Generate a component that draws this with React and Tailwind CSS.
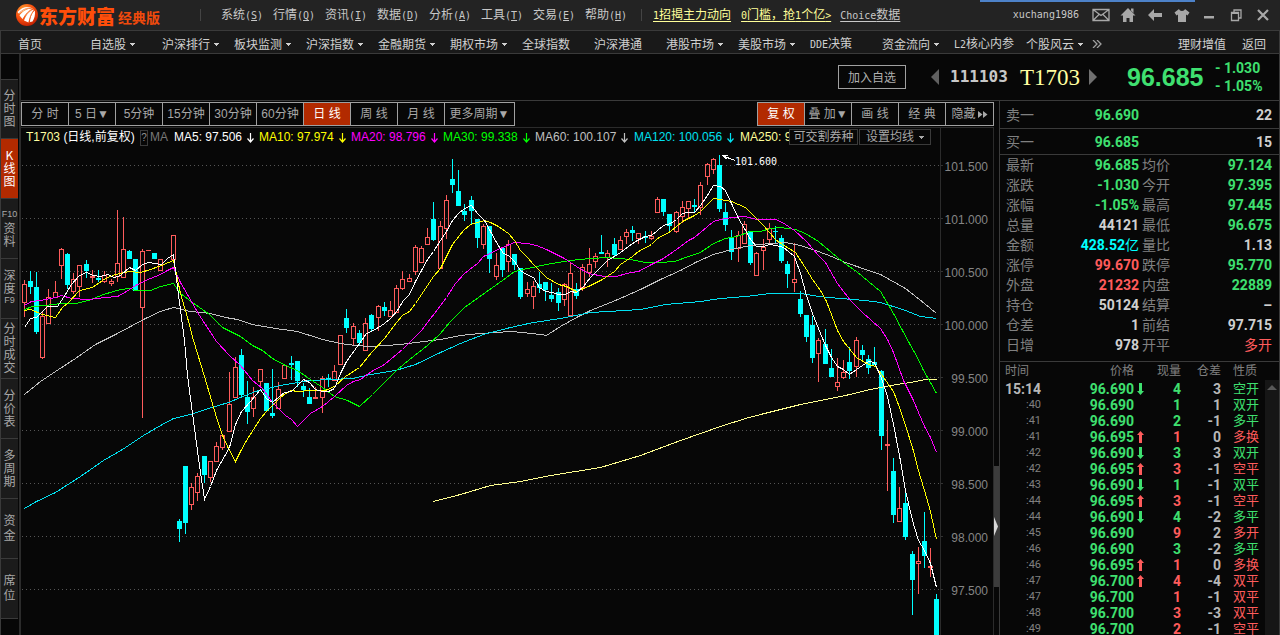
import React from "react";

const MENUS = [["系统", "S"], ["行情", "Q"], ["资讯", "I"], ["数据", "D"], ["分析", "A"], ["工具", "T"], ["交易", "E"], ["帮助", "H"]];

const NAV = [
  ["首页", false], ["自选股", true], ["沪深排行", true], ["板块监测", true], ["沪深指数", true],
  ["金融期货", true], ["期权市场", true], ["全球指数", false], ["沪深港通", false], ["港股市场", true],
  ["美股市场", true], ["DDE决策", false], ["资金流向", true], ["L2核心内参", false], ["个股风云", true],
];

const SIDE = [
  ["分", "时", "图"], ["K", "线", "图"], ["F10", "资", "料"], ["深", "度", "F9"], ["分", "时", "成", "交"],
  ["分", "价", "表"], ["多", "周", "期"], ["资", "金"], ["席", "位"],
];

const PERIODS = ["分 时", "5 日▼", "5分钟", "15分钟", "30分钟", "60分钟", "日 线", "周 线", "月 线", "更多周期▼"];

const LEGEND = [
  ["MA5: 97.506", "text-white", "w-[85px]"],
  ["MA10: 97.974", "text-[#ffff00]", "w-[92px]"],
  ["MA20: 98.796", "text-[#ff00ff]", "w-[92px]"],
  ["MA30: 99.338", "text-[#00ff00]", "w-[92px]"],
  ["MA60: 100.107", "text-[#c0c0c0]", "w-[99px]"],
  ["MA120: 100.056", "text-[#00e0f0]", "w-[106px]"],
  ["MA250: 99.487", "text-[#ffff99]", "w-[106px]"],
];

const G = "text-[#3fe070]";
const R = "text-[#ff5c5c]";
const W = "text-[#d0d0d0]";
const C = "text-[#00ffff]";

const QUOTES = [
  ["最新", "96.685", G, "均价", "97.124", G],
  ["涨跌", "-1.030", G, "今开", "97.395", G],
  ["涨幅", "-1.05%", G, "最高", "97.445", G],
  ["总量", "44121", W, "最低", "96.675", G],
  ["金额", "428.52亿", C, "量比", "1.13", W],
  ["涨停", "99.670", R, "跌停", "95.770", G],
  ["外盘", "21232", R, "内盘", "22889", G],
  ["持仓", "50124", W, "结算", "–", W],
  ["仓差", "1", W, "前结", "97.715", W],
  ["日增", "978", W, "开平", "多开", R],
];

const TRADES = [
  ["15:14", "96.690", "d", "4", G, "3", "空开", G],
  [":40", "96.690", "", "1", G, "1", "双开", G],
  [":41", "96.690", "", "2", G, "-1", "多平", G],
  [":41", "96.695", "u", "1", R, "0", "多换", R],
  [":42", "96.690", "d", "3", G, "3", "双开", G],
  [":42", "96.695", "u", "3", R, "-1", "空平", R],
  [":43", "96.690", "d", "1", G, "-1", "双平", G],
  [":44", "96.695", "u", "3", R, "-1", "空平", R],
  [":44", "96.690", "d", "4", G, "-2", "多平", G],
  [":45", "96.690", "", "9", R, "2", "多开", R],
  [":46", "96.690", "", "3", G, "-2", "多平", G],
  [":46", "96.695", "u", "1", R, "0", "多换", R],
  [":47", "96.700", "u", "4", R, "-4", "双平", R],
  [":47", "96.700", "", "1", R, "-1", "双平", R],
  [":48", "96.700", "", "3", R, "-3", "双平", R],
  [":49", "96.700", "", "2", R, "-1", "空平", R],
];

// x, high, body top, body bottom, low, rising
const CANDLES = [
  [24,280,284,303,317,1],[30,271,281,287,294,0],[36,272,287,332,334,0],[42,312,316,358,359,1],[48,289,297,324,324,1],
  [55,281,292,298,298,1],[61,248,249,266,279,1],[67,253,254,285,289,0],[73,273,279,292,294,1],[79,265,265,287,297,1],
  [86,260,264,271,278,0],[92,270,276,278,283,1],[98,270,278,280,282,0],[104,271,275,282,283,1],[111,279,281,284,286,1],
  [117,210,263,277,282,1],[123,217,249,278,278,1],[129,250,251,259,259,0],[135,259,259,291,291,0],[142,249,251,308,418,1],
  [148,250,250,251,251,1],[154,253,253,259,259,0],[160,259,259,271,271,1],[173,235,235,260,260,1],[179,519,521,529,542,0],
  [185,466,466,523,534,0],[191,483,487,505,510,1],[197,473,476,493,501,1],[204,456,456,475,483,0],[210,461,461,478,482,1],
  [216,442,446,462,462,1],[222,435,435,448,450,1],[229,372,404,432,432,1],[235,357,367,398,398,1],[241,349,355,395,397,0],
  [247,381,397,412,424,0],[253,387,397,409,417,1],[260,369,369,382,387,1],[266,383,383,411,411,0],[272,369,413,416,418,0],
  [278,382,389,409,409,1],[284,365,365,379,379,1],[291,356,363,365,380,0],[297,361,361,381,387,0],[303,383,386,390,397,0],
  [309,388,397,404,404,0],[315,387,397,399,399,1],[322,376,378,398,413,1],[328,374,378,379,387,0],[334,365,371,381,381,1],
  [340,335,335,365,365,1],[346,309,318,328,333,0],[353,323,326,339,345,1],[359,330,333,343,345,0],[365,318,323,351,351,1],
  [371,314,315,329,332,0],[378,305,306,318,331,1],[384,302,307,311,316,0],[390,301,310,317,317,1],[396,285,288,313,313,1],
  [402,271,279,289,290,1],[409,274,278,282,282,1],[415,245,247,272,275,1],[421,246,248,263,263,1],[427,228,237,245,245,1],
  [433,202,219,240,241,0],[440,221,226,269,269,1],[446,195,200,229,239,1],[452,159,179,185,193,0],[458,170,191,206,206,0],
  [464,204,211,215,221,0],[471,196,200,211,225,0],[477,219,219,238,248,0],[483,224,226,245,249,1],[489,226,226,259,273,0],
  [496,253,265,277,280,1],[502,247,248,270,277,0],[508,240,244,262,272,1],[514,254,254,265,270,0],[520,268,268,297,299,0],
  [527,282,289,294,297,1],[533,281,286,297,309,1],[539,272,284,288,293,0],[545,282,282,290,301,0],[551,283,295,299,302,0],
  [558,288,292,303,311,0],[564,283,284,300,306,1],[570,263,273,316,316,1],[576,283,289,296,299,0],[582,264,267,288,291,1],
  [589,248,264,273,277,1],[595,253,256,262,268,1],[601,235,252,254,254,0],[607,250,253,258,267,1],[614,238,244,255,257,0],
  [620,236,240,250,250,1],[626,229,232,237,244,1],[632,226,230,233,241,0],[638,233,233,239,244,1],[645,231,236,238,243,0],
  [651,231,236,239,240,1],[657,197,199,213,213,1],[663,199,199,212,216,0],[669,214,214,226,232,0],[676,211,212,232,233,1],
  [682,201,207,217,223,1],[688,201,201,209,219,1],[694,199,205,207,212,0],[700,182,185,208,215,1],[707,163,164,177,185,1],
  [713,158,159,170,174,1],[719,155,165,209,212,0],[725,203,212,225,231,0],[731,230,238,252,260,0],[738,231,235,249,262,1],
  [744,221,224,244,244,1],[750,231,231,263,265,0],[756,252,253,276,276,1],[763,239,247,251,270,1],[769,223,228,240,243,1],
  [775,226,231,232,243,0],[781,235,238,261,263,0],[787,261,264,274,288,0],[794,243,279,283,292,1],[800,291,299,314,317,0],
  [806,315,315,337,342,0],[812,316,325,358,363,0],[818,338,340,354,382,1],[825,329,344,364,364,0],[831,349,368,377,377,0],
  [837,358,382,387,391,1],[843,360,372,378,379,1],[849,347,362,371,379,0],[856,337,340,367,377,1],[862,345,350,355,360,0],
  [868,355,359,368,374,0],[874,347,362,365,365,0],[881,370,371,436,450,0],[887,420,444,446,491,1],[893,458,471,515,523,0],
  [899,487,508,522,522,1],[905,493,503,537,540,0],[912,551,554,580,615,0],[918,547,561,564,594,1],[924,512,541,556,568,0],
  [930,548,566,568,577,1],[936,594,599,660,660,0],
];

const LINES = [
  ["#c0c0c0", "24,394 40,381 55,371 75,358 95,344 115,334 130,326 145,318 160,311 173,307 190,311 210,313 225,317 237,319 252,324 275,328 297,331 322,339 340,343 355,345 370,346 400,344 415,342 440,339 460,335 480,333 510,331 522,332 540,334 546,335 560,326 578,316 590,310 615,300 640,289 660,279 680,270 695,262 713,254 735,248 750,245 770,243 785,242 800,245 818,251 831,256 845,262 868,270 880,274 905,288 924,303 936,313"],
  ["#00e0f0", "24,508 36,501 55,492 80,476 103,460 122,449 143,435 160,425 173,418 190,414 205,409 228,402 240,397 255,391 280,385 310,380 330,379 352,378 370,374 395,370 415,364 440,352 460,343 483,334 510,327 533,322 560,318 590,312 608,311 640,309 665,304 700,301 720,298 745,296 770,293 800,293 818,296 840,298 865,300 880,302 905,310 920,316 936,318"],
  ["#ffff90", "433,501 460,494 490,485 520,481 550,475 600,467 640,455 680,440 720,426 745,418 760,414 780,409 800,404 820,400 845,395 870,389 890,385 910,382 925,379 936,379"],
  ["#00ff00", "24,309 32,306 45,305 61,303 75,303 88,300 103,294 120,289 130,288 135,290 150,290 160,286 173,283 180,293 192,302 209,314 222,327 240,336 252,345 262,350 272,358 285,365 297,370 310,379 322,387 334,396 347,400 359,406 372,394 384,382 397,369 409,359 427,345 440,333 450,321 464,307 485,292 502,280 514,271 527,268 546,264 570,260 590,258 607,257 630,259 645,262 660,262 674,261 688,256 700,252 713,243 725,238 736,236 750,231 760,231 770,228 780,227 795,229 805,233 818,241 831,252 843,262 856,271 880,291 893,313 902,330 909,343 917,357 923,370 930,382 936,393"],
  ["#ff00ff", "24,305 31,301 40,300 55,297 61,295 71,298 88,299 105,297 117,296 126,291 135,285 150,278 160,274 167,270 173,267 180,282 199,315 216,341 229,355 240,365 252,380 262,388 272,402 285,415 291,419 297,426 310,413 322,406 334,396 346,385 353,381 360,379 371,371 384,364 397,353 402,349 421,330 440,305 446,297 455,283 464,273 477,263 483,256 502,247 514,242 527,243 536,245 546,249 564,258 576,266 588,273 604,276 616,276 626,273 638,271 651,264 663,258 676,249 688,240 694,237 713,221 720,219 731,217 744,216 757,219 775,219 782,222 794,230 806,241 818,255 825,262 837,283 850,300 862,312 880,328 887,339 893,352 903,380 913,400 918,412 924,426 930,437 936,452"],
  ["#ffff00", "24,310 30,309 42,314 55,317 62,307 68,302 79,290 92,287 105,278 115,274 129,271 140,272 150,269 161,265 168,262 173,260 180,293 187,317 193,340 204,376 216,417 222,435 228,448 235,461 240,451 246,440 260,418 266,411 272,405 280,397 285,393 291,390 297,391 310,390 325,390 334,386 345,376 359,367 371,352 384,338 396,322 402,315 409,311 415,303 433,276 440,268 452,244 463,230 470,224 477,222 484,220 490,222 498,226 508,233 514,240 520,250 527,257 533,264 546,277 558,284 566,286 576,291 588,286 602,279 614,271 620,264 632,256 638,251 651,244 657,238 670,231 682,221 694,215 700,211 707,204 713,198 719,199 731,201 738,204 745,207 757,219 763,225 775,239 782,244 795,252 806,269 812,279 820,290 826,301 837,330 843,341 856,357 868,364 875,366 881,374 893,391 899,407 905,425 912,447 918,470 924,490 930,511 936,539"],
  ["#ffffff", "24,327 30,318 36,317 47,306 57,306 63,297 71,284 79,275 86,272 93,275 100,276 107,274 114,277 120,275 129,267 135,270 142,264 148,262 154,263 161,264 167,258 173,254 179,302 184,340 187,375 192,413 198,458 204,499 210,486 216,470 229,447 235,424 241,411 250,401 260,389 266,398 272,402 279,396 284,392 291,391 297,385 303,379 309,382 315,389 322,391 328,391 334,388 340,373 346,361 359,343 366,333 371,331 378,327 384,323 390,318 397,310 403,300 409,294 415,281 421,270 427,259 433,251 440,240 446,231 452,220 458,213 464,208 471,205 477,213 484,220 490,231 496,242 503,253 508,255 514,261 520,270 526,274 533,277 539,287 545,291 552,292 558,294 565,294 570,291 576,292 583,286 590,277 596,271 602,265 607,260 614,256 620,252 628,246 635,241 645,236 651,235 657,230 663,225 670,223 676,219 682,213 688,212 694,212 700,205 707,195 713,185 720,186 725,190 731,203 738,218 744,228 750,239 756,246 763,246 769,244 776,245 783,247 788,251 794,256 800,273 806,295 812,313 818,328 825,345 831,357 837,366 843,369 849,374 856,369 862,365 868,361 874,362 881,378 887,396 893,424 899,455 905,490 912,520 918,540 924,550 930,563 936,587"],
];

const GRID = [
  [165, "101.500"], [218, "101.000"], [271, "100.500"], [324, "100.000"], [377, "99.500"],
  [430, "99.000"], [483, "98.500"], [536, "98.000"], [589, "97.500"],
];

function Mixed({ text }) {
  return text.split(/([\x20-\x7e]+)/).map((part, i) =>
    i % 2 ? <span key={i} className="font-['DejaVu_Sans_Mono',monospace] text-[10px]">{part}</span> : part
  );
}

function Caret() {
  return (
    <svg width="5" height="3" viewBox="0 0 5 3" className="ml-1 shrink-0 fill-current" shapeRendering="crispEdges">
      <path d="M0 0h5v1H0zM1 1h3v1H1zM2 2h1v1H2z" />
    </svg>
  );
}

function Logo() {
  return (
    <svg width="22" height="22" viewBox="0 0 22 22">
      <defs>
        <radialGradient id="ball" cx="0.35" cy="0.25" r="0.85">
          <stop offset="0" stopColor="#ffa030" />
          <stop offset="0.5" stopColor="#f85010" />
          <stop offset="1" stopColor="#b81800" />
        </radialGradient>
      </defs>
      <circle cx="11" cy="11" r="11" fill="url(#ball)" />
      <path d="M1.500 8C5 4 10 2 15.500 3.500 12 4.500 6 6.500 3 10z" fill="#fff" />
      <path d="M3.500 11.500C6.500 7 12 4 17 4.500 13 7.500 9 11 6.500 15z" fill="#fff" />
      <path d="M8 16.500C10 11 14 6.500 18 5.500 16 9 13.500 13 12.500 18.500z" fill="#fff" />
      <path d="M14 18C14 13 16.500 8 18.800 6.500 19.500 10 18.500 14.500 16.500 17.500z" fill="#fff" />
      <path d="M2 10.500C6 5.500 11 3.800 16 3.800M7 16C9 10 13 6 17.500 4.800M13 18.800C13.500 13 16 8 18.500 6" stroke="#f06018" strokeWidth="0.700" fill="none" />
    </svg>
  );
}

function WindowIcon({ label, children }) {
  return (
    <button aria-label={label} className="flex h-5 w-[27px] items-center justify-center text-[#a8a8a8]">
      <svg width="18" height="16" viewBox="0 0 18 16" fill="currentColor">{children}</svg>
    </button>
  );
}

function Header() {
  return (
    <header className="relative flex h-[30px] shrink-0 items-center bg-[#232323] pl-4 text-[12px] text-[#c8c8c8]">
      <div className="absolute right-[85px] top-0 h-[2px] w-[215px] bg-[#4d82c9]" />
      <div className="flex w-[184px] items-center">
        <Logo />
        <span className="ml-px text-[19px] font-black leading-none text-[#ff4e0a]">东方财富</span>
        <span className="ml-[3px] mt-1 text-[14px] font-bold leading-none text-[#f04a0c]">经典版</span>
      </div>
      <div className="mr-5 h-3 w-px bg-[#444]" />
      {MENUS.map(([name, key]) => (
        <button key={key} className="w-[52px] text-left">
          {name}
          <span className="font-['DejaVu_Sans_Mono',monospace] text-[10px]">(<u>{key}</u>)</span>
        </button>
      ))}
      <div className="ml-1 mr-[11px] h-3 w-px bg-[#444]" />
      <a href="#tips" className="text-[#ffff99] underline underline-offset-2"><Mixed text="1招揭主力动向" /></a>
      <a href="#open" className="ml-[10px] text-[#ffff99] underline underline-offset-2"><Mixed text="0门槛，抢1个亿>" /></a>
      <a href="#choice" className="ml-[9px] underline underline-offset-2"><Mixed text="Choice数据" /></a>
      <div className="ml-auto flex items-center pr-1">
        <span className="mr-2 font-['DejaVu_Sans_Mono',monospace] text-[10px]">xuchang1986</span>
        <WindowIcon label="邮件">
          <path d="M1 2.500h16v11H1zM1 2.500l8 6 8-6M1 13.500l6-6M17 13.500l-6-6" fill="none" stroke="currentColor" strokeWidth="1.300" />
        </WindowIcon>
        <WindowIcon label="主页">
          <path d="M9 1l7.500 7.500H14V15h-3.500v-4h-3v4H4V8.500H1.500zM12 1.500h2.500V6L12 3.500z" />
        </WindowIcon>
        <WindowIcon label="后退">
          <path d="M2 8l6-6v4h8v4H8v4z" />
        </WindowIcon>
        <WindowIcon label="换肤">
          <path d="M6 2c.5 2.500 5.500 2.500 6 0l4.500 3.500-2 3L13 7.500V15H5V7.500l-1.500 1-2-3z" />
        </WindowIcon>
        <WindowIcon label="最小化"><path d="M4 9h10v2.500H4z" /></WindowIcon>
        <WindowIcon label="还原">
          <path d="M4.500 5.500h7v8h-7zM7 5V3h7v8h-2" fill="none" stroke="currentColor" strokeWidth="1.300" />
          <path d="M4 5h8v2H4z" />
        </WindowIcon>
        <WindowIcon label="关闭"><path d="M4 3l10 10M14 3L4 13" stroke="currentColor" strokeWidth="2.200" /></WindowIcon>
      </div>
    </header>
  );
}

function NavBar() {
  return (
    <nav className="flex h-[23px] shrink-0 items-center whitespace-nowrap border-b border-[#3a3a3a] bg-[#191919] pl-[17px] pt-1 text-[12px] text-[#d0d0d0]">
      {NAV.map(([name, drop]) => (
        <a key={name} href="#nav" className="flex w-[72px] items-center">
          <span><Mixed text={name} /></span>
          {drop && <Caret />}
        </a>
      ))}
      <svg width="10" height="8" viewBox="0 0 10 8" className="-ml-[6px]" fill="none" stroke="#a0a0a0" strokeWidth="1.300">
        <path d="M1 0l4 4-4 4M5 0l4 4-4 4" />
      </svg>
      <a href="#wealth" className="ml-auto">理财增值</a>
      <a href="#back" className="ml-4 mr-[13px]">返回</a>
    </nav>
  );
}

function Sidebar() {
  return (
    <aside className="w-5 shrink-0 border-r-2 border-[#2b2b2b] pr-px pt-[25px] text-[12px] text-[#a8a8a8]">
      {SIDE.map((chars, i) => (
        <button
          key={i}
          className={
            "flex h-[60px] w-full flex-col items-center justify-center border-b border-[#3a3a3a] pb-[3px] " +
            (chars.length === 2 ? "leading-[15px] " : "leading-[13px] ") +
            (i === 0 ? "border-t " : "") +
            (i === 1 ? "bg-[#b22a00] text-white" : "bg-[#1b1b1b]")
          }
        >
          {chars.map((c, j) => (
            <span key={j} className={c.length > 1 ? "font-['Liberation_Sans',sans-serif] text-[9px]" : ""}>{c}</span>
          ))}
        </button>
      ))}
    </aside>
  );
}

function Summary() {
  return (
    <section className="flex h-[47px] shrink-0 items-center justify-end border-b border-[#3a3a3a]">
      <button className="h-6 w-[68px] border border-[#a0a0a0] text-[12px] text-[#b0b0b0]">加入自选</button>
      <button aria-label="上一个" className="ml-[25px]">
        <svg width="8" height="16" viewBox="0 0 8 16" fill="#606060"><path d="M8 0v16L0 8z" /></svg>
      </button>
      <span className="ml-[11px] w-[60px] font-['DejaVu_Sans_Mono',monospace] text-[16px] font-bold text-[#c8c8c8]">111103</span>
      <span className="ml-[10px] w-[60px] font-['Liberation_Serif',serif] text-[23px] leading-none text-[#ffffa0]">T1703</span>
      <button aria-label="下一个" className="ml-[9px]">
        <svg width="8" height="16" viewBox="0 0 8 16" fill="#707070"><path d="M0 0v16l8-8z" /></svg>
      </button>
      <span className="ml-[30px] w-[80px] font-['Liberation_Sans',sans-serif] text-[25px] font-bold leading-none text-[#3fe070]">96.685</span>
      <div className="ml-2 w-16 font-[Roboto,sans-serif] text-[14px] font-bold leading-[18px] text-[#3fe070]">
        <div>- 1.030</div>
        <div>- 1.05%</div>
      </div>
    </section>
  );
}

const BTN = "h-[22px] whitespace-pre text-center ";

function Toolbar() {
  return (
    <div className="flex h-[26px] shrink-0 items-center justify-between pr-[5px] font-['Liberation_Sans','Noto_Sans_CJK_SC',sans-serif] text-[12px] text-[#a8a8a8]">
      <div className="flex divide-x divide-[#a0a0a0] border border-[#a0a0a0]">
        {PERIODS.map((p, i) => (
          <button key={p} className={BTN + (i === 9 ? "w-[69px] " : "w-[47px] ") + (i === 6 ? "bg-[#b22a00] text-white" : "")}>{p}</button>
        ))}
      </div>
      <div className="flex divide-x divide-[#a0a0a0] border border-[#a0a0a0]">
        <button className={BTN + "w-[47px] bg-[#b22a00] text-white"}>复 权</button>
        <button className={BTN + "w-[47px]"}>叠 加▼</button>
        <button className={BTN + "w-[47px]"}>画 线</button>
        <button className={BTN + "w-[47px]"}>经 典</button>
        <button className={BTN + "flex w-[47px] items-center justify-center gap-[2px]"}>
          隐藏
          <svg width="10" height="7" viewBox="0 0 10 7" fill="currentColor"><path d="M0 0l4.500 3.500L0 7zM5 0l4.500 3.500L5 7z" /></svg>
        </button>
      </div>
    </div>
  );
}

function Legend() {
  return (
    <div className="flex h-5 shrink-0 font-['Liberation_Sans','Noto_Sans_CJK_SC',sans-serif] text-[12px]">
      <div className="flex min-w-0 flex-1 items-start border-r border-[#2b2b2b] pr-[9px]">
        <div className="flex min-w-0 flex-1 items-center overflow-hidden whitespace-nowrap pl-[5px] leading-[19px]">
          <span className="w-[114px] shrink-0">
            <span className="text-[#ffffa0]">T1703</span> <span className="text-white">(日线,前复权)</span>
          </span>
          <button className="h-4 w-2 shrink-0 border border-[#3a3a3a] text-[10px] leading-[13px] text-[#909090]">?</button>
          <span className="ml-[2px] w-6 shrink-0 text-[#787878]">MA</span>
          {LEGEND.map(([text, color, width]) => (
            <span key={text} className={"flex shrink-0 items-center gap-[5px] " + color + " " + width}>
              {text}
              <svg width="7" height="10" viewBox="0 0 7 10" fill="none" stroke="currentColor" strokeWidth="1.200">
                <path d="M3.500 0v9M0.500 5.500l3 3.500 3-3.500" />
              </svg>
            </span>
          ))}
        </div>
        <button className="mt-px h-4 w-[69px] shrink-0 border border-[#3a3a3a] leading-[14px] text-[#a8a8a8]">可交割券种</button>
        <button className="ml-px mt-px flex h-4 w-[72px] shrink-0 items-center justify-center gap-px border border-[#3a3a3a] leading-[14px] text-[#a8a8a8]">
          设置均线<Caret />
        </button>
      </div>
      <div className="w-[52px] shrink-0" />
    </div>
  );
}

function Candle({ d: [x, high, top, bottom, low, up] }) {
  const h = Math.max(bottom - top, 1);
  if (!up || h < 3) {
    const color = up ? "#ff5c5c" : "#00ffff";
    return (
      <g fill={color}>
        <rect x={x} y={high} width="1" height={low - high} />
        <rect x={x - 2} y={top} width="5" height={h} />
      </g>
    );
  }
  return (
    <g fill="#ff5c5c">
      {top > high && <rect x={x} y={high} width="1" height={top - high} />}
      {low > bottom && <rect x={x} y={bottom} width="1" height={low - bottom} />}
      <rect x={x - 1.5} y={top + 0.5} width="4" height={h - 1} fill="none" stroke="#ff5c5c" />
    </g>
  );
}

function Chart() {
  return (
    <svg role="img" aria-label="日线图" className="min-h-0 w-full flex-1" viewBox="21 148 972 487" preserveAspectRatio="xMinYMin slice">
      <g shapeRendering="crispEdges">
        {GRID.map(([y]) => (
          <line key={y} x1="22" x2="940" y1={y + 0.5} y2={y + 0.5} stroke="#555" strokeDasharray="1 3" />
        ))}
        {GRID.map(([y]) => <rect key={y} x="940" y={y} width="3" height="1" fill="#333" />)}
        <rect x="940" y="148" width="1" height="487" fill="#2b2b2b" />
        {CANDLES.map((d) => <Candle key={d[0]} d={d} />)}
        {LINES.map(([color, points]) => (
          <polyline key={color} points={points} fill="none" stroke={color} transform="translate(.5 .5)" />
        ))}
        <path d="M735 160.500L722 155.500" stroke="#fff" />
        <path d="M721 155h7v1h-4l3 3h-2z" fill="#fff" />
      </g>
      <text x="735" y="165" fill="#fff" className="font-['DejaVu_Sans_Mono',monospace] text-[10px]">101.600</text>
      {GRID.map(([y, label]) => (
        <text key={y} x="988" y={y + 6} textAnchor="end" fill="#858585" className="font-['Liberation_Sans',sans-serif] text-[12px]">{label}</text>
      ))}
    </svg>
  );
}

function Splitter() {
  return (
    <div className="flex w-[5px] shrink-0 flex-col">
      <div className="flex-[339]" />
      <div className="flex flex-[121] items-center bg-[#3c3c3c]">
        <svg width="4" height="19" viewBox="0 0 4 19" fill="#d8d8d8"><path d="M0 0l4 9.500L0 19z" /></svg>
      </div>
      <div className="flex-[48]" />
    </div>
  );
}

const NUM = "font-[Roboto,'Noto_Sans_CJK_SC',sans-serif] text-[14px] font-bold ";

function Value({ text }) {
  return text.split(/([\u4e00-\u9fff]+)/).map((part, i) =>
    i % 2 ? <span key={i} className="font-normal">{part}</span> : part
  );
}

function TickArrow({ dir }) {
  if (!dir) return null;
  return (
    <svg width="7" height="12" viewBox="0 0 7 12" className={"mx-auto " + (dir === "u" ? "fill-[#ff5c5c]" : "fill-[#3fe070]")}>
      {dir === "u" ? <path d="M3.500 0L7 4H5v8H2V4H0z" /> : <path d="M3.500 12L7 8H5V0H2v8H0z" />}
    </svg>
  );
}

function QuotePanel() {
  return (
    <aside className="flex w-[280px] shrink-0 flex-col overflow-hidden border-l border-[#3a3a3a] text-[#808080]">
      {[["卖一", "96.690", "22", "h-7"], ["买一", "96.685", "15", "h-[26px]"]].map(([name, price, qty, h]) => (
        <div key={name} className={"flex shrink-0 items-center border-b border-[#3a3a3a] pl-[6px] pr-[7px] " + h}>
          <span className="w-[60px] pb-[2px] text-[14px]">{name}</span>
          <span className={NUM + "w-[73px] text-right " + G}>{price}</span>
          <span className={NUM + "flex-1 text-right " + W}>{qty}</span>
        </div>
      ))}
      <div className="shrink-0 border-b border-[#3a3a3a] pb-[6px]">
        <table className="w-full table-fixed border-collapse leading-5">
          <colgroup>
            <col className="w-[50px]" /><col className="w-[89px]" /><col className="w-[50px]" /><col />
          </colgroup>
          <tbody>
            {QUOTES.map(([a, av, ac, b, bv, bc]) => (
              <tr key={a} className="h-5">
                <th scope="row" className="p-0 pl-[6px] text-left align-top text-[14px] font-normal leading-[18px]">{a}</th>
                <td className={NUM + "p-0 text-right leading-5 " + ac}><Value text={av} /></td>
                <th scope="row" className="p-0 pl-[3px] text-left align-top text-[14px] font-normal leading-[18px]">{b}</th>
                <td className={NUM + "p-0 pr-[7px] text-right leading-5 " + bc}><Value text={bv} /></td>
              </tr>
            ))}
          </tbody>
        </table>
      </div>
      <div className="flex min-h-0 flex-1 overflow-hidden">
        <table className="min-w-0 flex-1 table-fixed border-collapse self-start leading-4">
          <colgroup>
            <col className="w-[50px]" /><col className="w-[84px]" /><col className="w-[13px]" />
            <col className="w-[34px]" /><col className="w-[40px]" /><col className="w-[44px]" />
          </colgroup>
          <thead>
            <tr className="h-[19px] align-top text-[12px]">
              <th className="p-0 pl-[5px] text-left font-normal">时间</th>
              <th className="p-0 text-right font-normal">价格</th>
              <th className="p-0" />
              <th className="p-0 text-right font-normal">现量</th>
              <th className="p-0 text-right font-normal">仓差</th>
              <th className="p-0 pl-3 text-left font-normal">性质</th>
            </tr>
          </thead>
          <tbody>
            {TRADES.map(([time, price, dir, vol, vc, diff, kind, kc], i) => (
              <tr key={i} className="h-4">
                <td className={i === 0 ? NUM + "p-0 pr-[9px] text-right leading-4 text-[#b8b8b8]" : "p-0 pr-[9px] text-right font-[Roboto,sans-serif] text-[11px] leading-4"}>{time}</td>
                <td className={NUM + "p-0 text-right leading-4 " + G}>{price}</td>
                <td className="p-0"><TickArrow dir={dir} /></td>
                <td className={NUM + "p-0 text-right leading-4 " + vc}>{vol}</td>
                <td className={NUM + "p-0 text-right leading-4 text-[#b8b8b8]"}>{diff}</td>
                <td className={"p-0 pl-3 align-top text-[13px] leading-[14px] " + kc}>{kind}</td>
              </tr>
            ))}
          </tbody>
        </table>
        <div className="mt-[18px] w-[14px] shrink-0 bg-[#161616] pt-[5px]">
          <svg width="10" height="5" viewBox="0 0 10 5" className="mx-auto fill-[#585858]"><path d="M5 0l5 5H0z" /></svg>
        </div>
      </div>
    </aside>
  );
}

export default function App() {
  return (
    <div className="flex h-screen flex-col overflow-hidden bg-[#070707] font-['Noto_Sans_CJK_SC',sans-serif] leading-4">
      <Header />
      <div className="flex min-h-0 flex-1 flex-col border border-b-0 border-[#3a3a3a]">
        <NavBar />
        <div className="flex min-h-0 flex-1">
          <Sidebar />
          <main className="flex min-w-0 flex-1 flex-col">
            <Summary />
            <div className="flex min-h-0 flex-1">
              <div className="flex min-w-0 flex-1 flex-col">
                <Toolbar />
                <div className="flex min-h-0 flex-1">
                  <section className="flex min-w-0 flex-1 flex-col border-r border-t border-[#2b2b2b]">
                    <Legend />
                    <Chart />
                  </section>
                  <Splitter />
                </div>
              </div>
              <QuotePanel />
            </div>
          </main>
        </div>
      </div>
    </div>
  );
}
